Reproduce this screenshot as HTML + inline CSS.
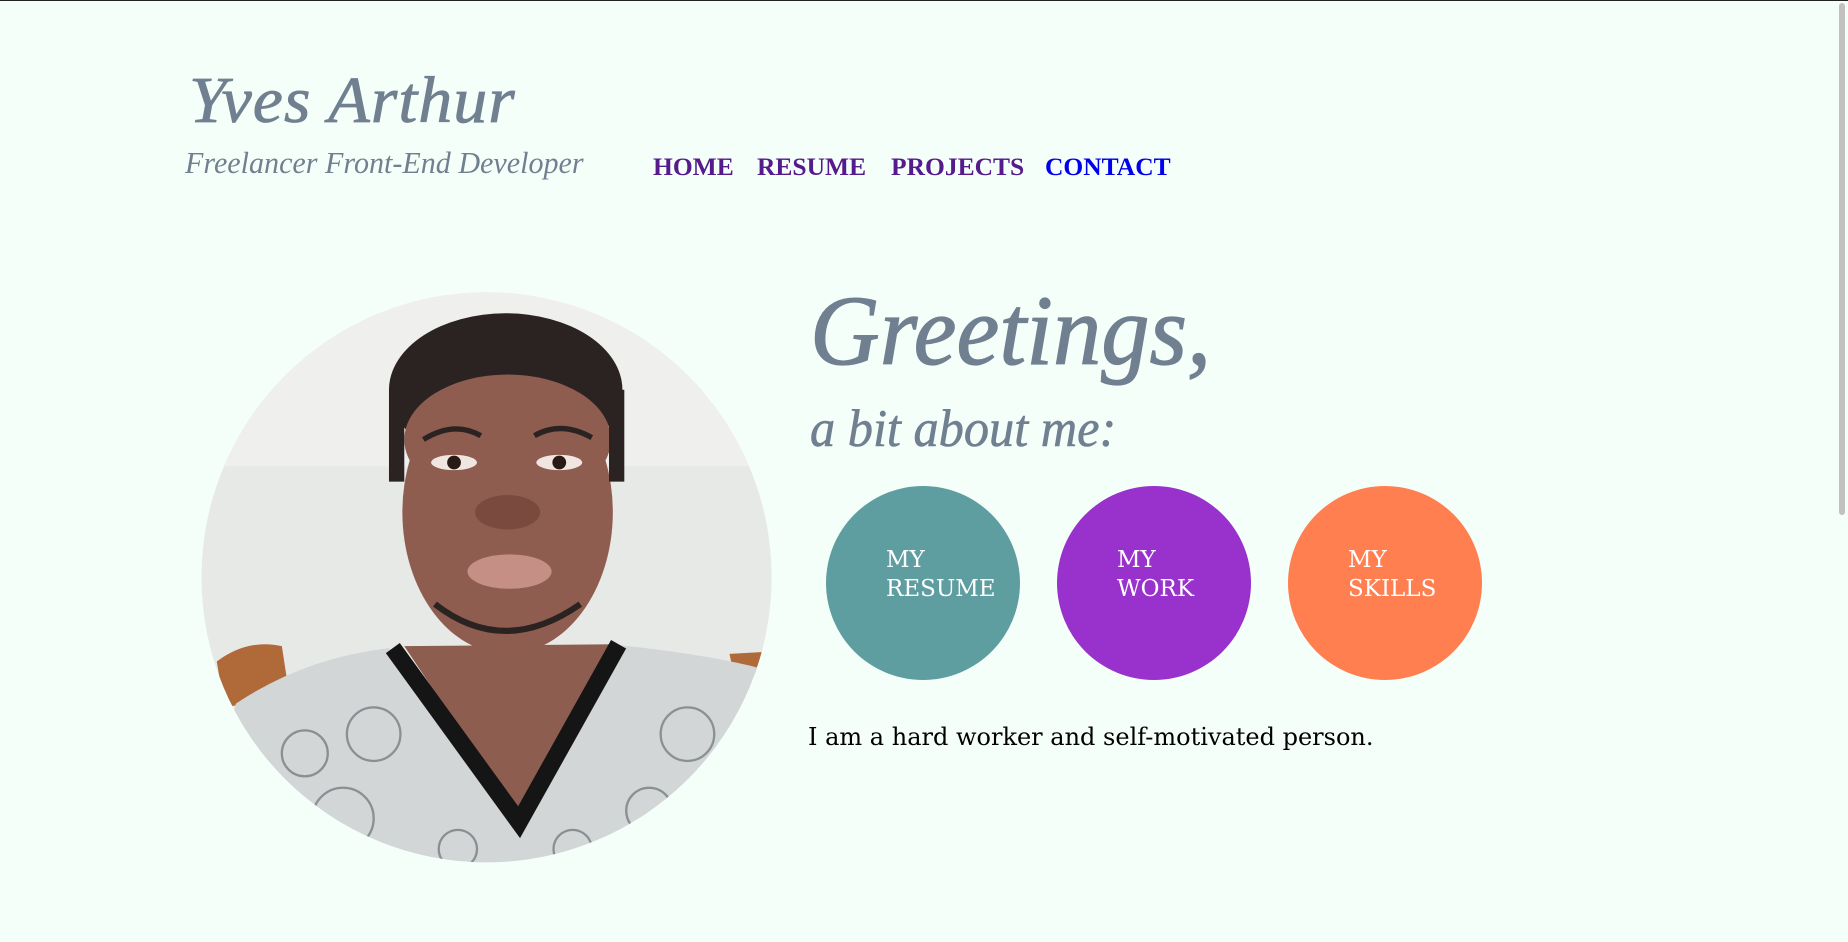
<!DOCTYPE html>
<html><head><meta charset="utf-8"><style>
html,body{margin:0;padding:0;}
body{width:1848px;height:941px;background:#f5fffa;position:relative;overflow:hidden;border-top:1px solid #222;box-sizing:border-box;font-family:"Liberation Serif",serif;}
.a{position:absolute;white-space:nowrap;}
.slate{color:#708090;font-style:italic;}
.nav{font-weight:bold;font-size:25.5px;top:151px;}
.c{position:absolute;width:194px;height:194px;border-radius:50%;top:485px;}
.c span{position:absolute;left:60px;top:60px;color:#fff;font-family:"DejaVu Serif",serif;font-size:23px;line-height:29px;}
</style></head><body>
<div class="a slate" style="left:189px;top:62px;font-size:66px;letter-spacing:1px;transform:scaleX(1.03);transform-origin:left;-webkit-text-stroke:0.8px #708090;">Yves Arthur</div>
<div class="a slate" style="left:185px;top:144px;font-size:31px;transform:scaleX(0.97);transform-origin:left;">Freelancer Front-End Developer</div>
<div class="a nav" style="left:653px;color:#551a8b;">HOME</div>
<div class="a nav" style="left:757px;color:#551a8b;">RESUME</div>
<div class="a nav" style="left:891px;color:#551a8b;">PROJECTS</div>
<div class="a nav" style="left:1045px;color:#0000ee;">CONTACT</div>

<svg class="a" style="left:190px;top:274px" width="600" height="600" viewBox="0 0 1568 1568">
<defs><clipPath id="cp"><circle cx="775" cy="790" r="745"/></clipPath></defs>
<g clip-path="url(#cp)">
<rect width="1568" height="1568" fill="#e7e9e6"/>
<rect x="0" y="0" width="1568" height="500" fill="#efefed"/>
<path d="M70 1010 Q150 950 240 970 L260 1100 L90 1130Z" fill="#b06a3a"/>
<path d="M1410 990 L1500 985 L1500 1040 L1420 1040Z" fill="#b06a3a"/>
<path d="M120 1120 Q300 1000 520 975 L860 1420 L1100 965 Q1350 990 1500 1030 L1568 1568 L0 1568Z" fill="#d3d6d6"/>
<g stroke="#5a6066" stroke-width="6" fill="none" opacity="0.6">
<circle cx="300" cy="1250" r="60"/><circle cx="480" cy="1200" r="70"/><circle cx="1300" cy="1200" r="70"/><circle cx="1200" cy="1400" r="60"/><circle cx="400" cy="1420" r="80"/><circle cx="1400" cy="1350" r="50"/><circle cx="700" cy="1500" r="50"/><circle cx="1000" cy="1500" r="50"/>
</g>
<path d="M560 970 L1110 965 L860 1420Z" fill="#8d5e4f"/>
<path d="M530 975 L860 1430 L1120 965" stroke="#151515" stroke-width="45" fill="none"/>
<ellipse cx="830" cy="620" rx="275" ry="370" fill="#8e5d50"/>
<ellipse cx="825" cy="300" rx="305" ry="200" fill="#2a2321"/>
<ellipse cx="830" cy="430" rx="270" ry="170" fill="#8e5d50"/>
<rect x="520" y="300" width="40" height="240" fill="#2a2321"/>
<rect x="1095" y="300" width="40" height="240" fill="#2a2321"/>
<ellipse cx="690" cy="490" rx="60" ry="20" fill="#efe6e2"/><circle cx="690" cy="490" r="18" fill="#2a1a16"/>
<ellipse cx="965" cy="490" rx="60" ry="20" fill="#efe6e2"/><circle cx="965" cy="490" r="18" fill="#2a1a16"/>
<path d="M610 430 Q690 380 760 420" stroke="#2a2321" stroke-width="14" fill="none"/>
<path d="M900 420 Q970 380 1050 425" stroke="#2a2321" stroke-width="14" fill="none"/>
<ellipse cx="830" cy="620" rx="85" ry="45" fill="#7a4a3f"/>
<ellipse cx="835" cy="775" rx="110" ry="45" fill="#c58f86"/>
<path d="M640 860 Q820 1000 1020 860" stroke="#2a2321" stroke-width="16" fill="none"/>
</g>
</svg>

<div class="a slate" style="left:810px;top:272px;font-size:100px;transform:scaleX(0.965);transform-origin:left;-webkit-text-stroke:1.2px #708090;">Greetings,</div>
<div class="a slate" style="left:810px;top:398px;font-size:53px;transform:scaleX(0.95);transform-origin:left;-webkit-text-stroke:0.6px #708090;">a bit about me:</div>

<div class="c" style="left:826px;background:#5f9ea0;"><span>MY<br>RESUME</span></div>
<div class="c" style="left:1057px;background:#9932cc;"><span>MY<br>WORK</span></div>
<div class="c" style="left:1288px;background:#ff7f50;"><span>MY<br>SKILLS</span></div>

<div class="a" style="left:808px;top:722px;font-family:'DejaVu Serif',serif;font-size:24px;color:#000;">I am a hard worker and self-motivated person.</div>

<div class="a" style="left:1836px;top:0;width:12px;height:941px;background:#f5fffa;"></div>
<div class="a" style="left:1839px;top:2px;width:6px;height:512px;background:#c1c1c1;border-radius:3px;"></div>
</body></html>
